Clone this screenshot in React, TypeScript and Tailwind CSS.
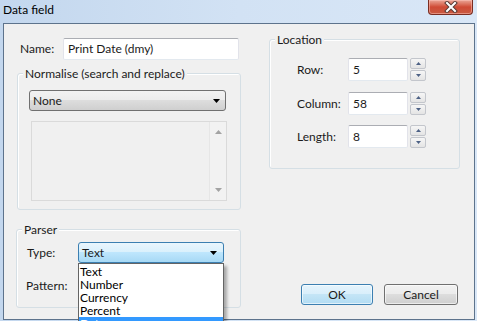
import React from "react";

const font = { fontFamily: "Lato, 'Open Sans', sans-serif" };

function TextBox({ value, className }: { value: string; className: string }) {
  return (
    <div
      className={`flex items-center rounded-[2px] border border-[#e2e3ea] border-t-[#abadb3] border-b-[#e3e9ef] bg-white pl-[4px] text-[12px] text-[#1b1b1b] ${className}`}
    >
      {value}
    </div>
  );
}

function Arrow({ className }: { className: string }) {
  return (
    <svg width="7" height="4" viewBox="0 0 7 4" className={className}>
      <path d="M0 0h7L3.5 4z" fill="currentColor" />
    </svg>
  );
}

function Spin() {
  return (
    <div className="ml-[2px] flex h-[23px] w-[16px] flex-col gap-[1px]">
      <div className="flex flex-1 items-center justify-center rounded-[2px] border border-[#c3c6cc] bg-gradient-to-b from-[#f6f6f6] to-[#e4e4e4]">
        <svg width="5" height="3" viewBox="0 0 5 3">
          <path d="M0 3h5L2.5 0z" fill="#4d6185" />
        </svg>
      </div>
      <div className="flex flex-1 items-center justify-center rounded-[2px] border border-[#c3c6cc] bg-gradient-to-b from-[#f6f6f6] to-[#e4e4e4]">
        <svg width="5" height="3" viewBox="0 0 5 3">
          <path d="M0 0h5L2.5 3z" fill="#4d6185" />
        </svg>
      </div>
    </div>
  );
}

function GroupBox({
  title,
  className,
  children,
}: {
  title: string;
  className: string;
  children?: React.ReactNode;
}) {
  return (
    <div className={`relative rounded-[3px] border border-[#d5dfe5] shadow-[inset_1px_1px_0_#ffffff] ${className}`}>
      <span className="absolute -top-[8px] left-[5px] bg-[#f0f0f0] px-[2px] text-[12px] leading-[15px] text-[#1b1b1b]">
        {title}
      </span>
      {children}
    </div>
  );
}

function SpinRow({ label, value, className }: { label: string; value: string; className: string }) {
  return (
    <div className={`flex items-center pl-[27px] ${className}`}>
      <span className="w-[51px] text-[12px] text-[#1b1b1b]">{label}</span>
      <div className="flex h-[23px] w-[60px] items-start rounded-[2px] border border-[#e2e3ea] border-t-[#abadb3] border-b-[#e3e9ef] bg-white pl-[4px] pt-[2px] text-[12px] text-[#1b1b1b]">
        {value}
      </div>
      <Spin />
    </div>
  );
}

export default function App() {
  return (
    <div
      className="relative flex h-[321px] w-[477px] flex-col overflow-hidden bg-gradient-to-r from-[#c3d7ee] via-[#d2e2f4] to-[#d9e7f7]"
      style={font}
    >
      {/* title bar */}
      <div className="flex h-[23px] shrink-0 items-start justify-between pl-[3px]">
        <span className="pt-[2px] text-[12px] leading-[15px] text-black">Data field</span>
        <div className="mr-[4px] flex h-[15px] w-[45px] items-center justify-center rounded-b-[4px] border border-t-0 border-[#7a2d22] bg-gradient-to-b from-[#e9a597] via-[#cf4a35] to-[#c85a42] shadow-[inset_0_0_0_1px_rgba(255,200,190,0.5)]">
          <svg width="14" height="12" viewBox="0 0 14 12">
            <path d="M3 2l8 8M11 2l-8 8" stroke="#5a3b36" strokeWidth="4" strokeLinecap="square" />
            <path d="M3 2l8 8M11 2l-8 8" stroke="#ffffff" strokeWidth="2" strokeLinecap="square" />
          </svg>
        </div>
      </div>

      {/* window body */}
      <div className="mb-[1px] ml-[3px] mr-[2px] flex flex-1 border border-[#5d738c] bg-[#f0f0f0] pl-[12px] pt-[14px] text-[#1b1b1b]">
        {/* left column */}
        <div className="flex w-[225px] flex-col">
          <div className="flex h-[22px] items-center">
            <span className="w-[47px] pl-[4px] text-[12px]">Name:</span>
            <TextBox value="Print Date (dmy)" className="h-[22px] w-[176px]" />
          </div>

          <GroupBox title="Normalise (search and replace)" className="ml-[1px] mt-[13px] h-[137px] w-[224px]">
            <div className="ml-[11px] mt-[16px] flex h-[21px] w-[197px] items-center justify-between rounded-[3px] border border-[#707070] bg-[linear-gradient(#f2f2f2,#ebebeb_50%,#dddddd_50%,#cfcfcf)] pl-[3px] pr-[5px] text-[12px]">
              <span>None</span>
              <Arrow className="text-black" />
            </div>
            <div className="ml-[13px] mt-[10px] flex h-[80px] w-[196px] border border-[#dadada] bg-[#f0f0f0]">
              <div className="flex-1" />
              <div className="flex w-[17px] flex-col items-center justify-between border-l border-[#e6e6e6] bg-[#f2f2f2] py-[8px]">
                <svg width="7" height="4" viewBox="0 0 7 4">
                  <path d="M0 4h7L3.5 0z" fill="#a3a3a3" />
                </svg>
                <svg width="7" height="4" viewBox="0 0 7 4">
                  <path d="M0 0h7L3.5 4z" fill="#a3a3a3" />
                </svg>
              </div>
            </div>
          </GroupBox>

          <GroupBox title="Parser" className="mt-[19px] h-[79px] w-[225px]">
            <div className="ml-[10px] mt-[12px] flex items-center">
              <span className="w-[51px] text-[12px]">Type:</span>
              <div className="relative">
                <div className="flex h-[21px] w-[146px] items-center justify-between rounded-[3px] border border-[#3c7fb1] bg-[linear-gradient(#eaf6fd,#d9f0fc_50%,#bee6fd_50%,#a7d9f5)] pl-[3px] pr-[6px] text-[12px]">
                  <span>Text</span>
                  <Arrow className="text-black" />
                </div>
                <div className="absolute left-0 top-full z-10 w-[146px] border border-[#646464] bg-white pt-[1px] text-[12px] shadow-[3px_3px_3px_rgba(0,0,0,0.3)]">
                  {["Text", "Number", "Currency", "Percent"].map((t) => (
                    <div key={t} className="h-[13px] pl-[1px] leading-[13px] text-black">
                      {t}
                    </div>
                  ))}
                  <div className="h-[13px] bg-[#3399ff] pl-[1px] leading-[13px] text-white">Date</div>
                </div>
              </div>
            </div>
            <div className="ml-[9px] mt-[14px] text-[12px]">Pattern:</div>
          </GroupBox>
        </div>

        {/* right column */}
        <div className="ml-[28px] flex w-[191px] flex-col">
          <GroupBox title="Location" className="mt-[1px] h-[130px] w-[191px]">
            <SpinRow label="Row:" value="5" className="mt-[18px]" />
            <SpinRow label="Column:" value="58" className="mt-[11px]" />
            <SpinRow label="Length:" value="8" className="mt-[10px]" />
          </GroupBox>

          <div className="ml-[32px] mt-[115px] flex gap-[11px]">
            <button className="h-[21px] w-[72px] rounded-[3px] border border-[#3c7fb1] bg-[linear-gradient(#e5f4fc,#d8eefb_50%,#c4e5f6_50%,#b2dcf3)] text-[12px] text-[#1b1b1b] shadow-[inset_0_0_0_1px_rgba(255,255,255,0.6)]">
              OK
            </button>
            <button className="h-[21px] w-[74px] rounded-[3px] border border-[#707070] bg-[linear-gradient(#f2f2f2,#ebebeb_50%,#dddddd_50%,#cfcfcf)] text-[12px] text-[#1b1b1b] shadow-[inset_0_0_0_1px_rgba(255,255,255,0.6)]">
              Cancel
            </button>
          </div>
        </div>
      </div>
    </div>
  );
}
